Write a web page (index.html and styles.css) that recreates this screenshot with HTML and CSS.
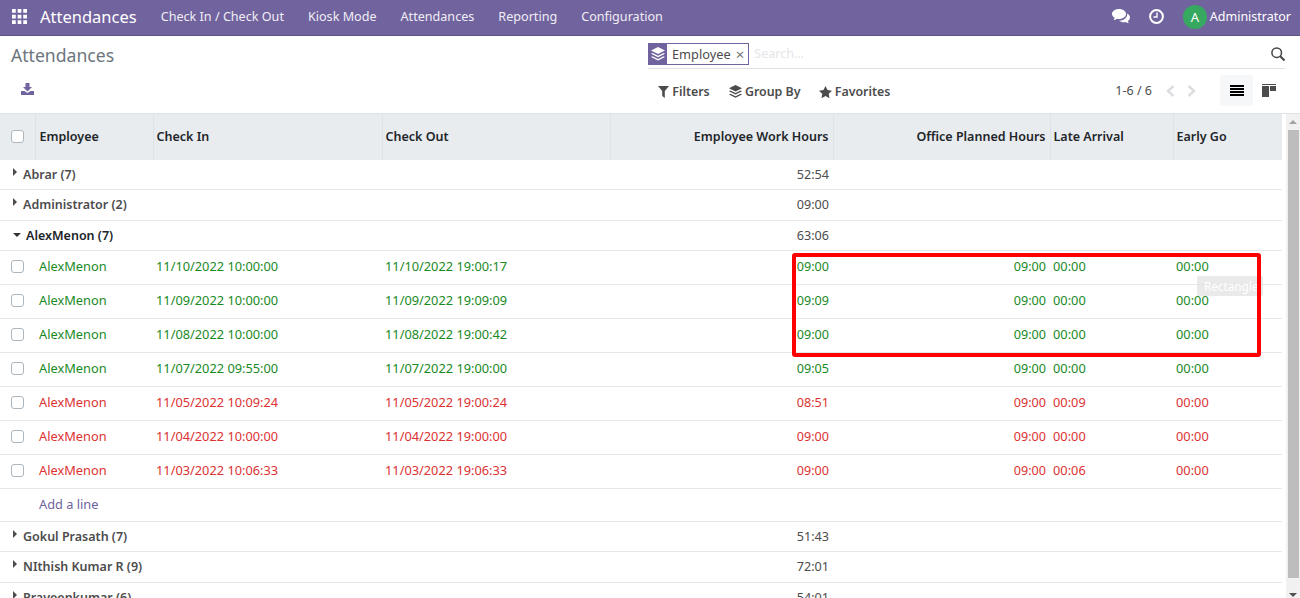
FILE: index.html
```html
<!DOCTYPE html>
<html lang="en">
<head>
    <meta charset="UTF-8">
    <title>Attendances</title>
    <link rel="stylesheet" href="styles.css">
</head>
<body>
    <header class="navbar">
        <svg class="apps-icon" width="15" height="15" viewBox="0 0 16 16" fill="#fff">
            <path d="M0 0h4v4H0zM6 0h4v4H6zM12 0h4v4h-4zM0 6h4v4H0zM6 6h4v4H6zM12 6h4v4h-4zM0 12h4v4H0zM6 12h4v4H6zM12 12h4v4h-4z"/>
        </svg>
        <span class="brand">Attendances</span>
        <nav class="menu">
            <span>Check In / Check Out</span>
            <span>Kiosk Mode</span>
            <span>Attendances</span>
            <span>Reporting</span>
            <span>Configuration</span>
        </nav>
        <div class="systray">
            <svg width="18" height="15" viewBox="0 0 18 15" fill="#fff">
                <path d="M7 0c3.900 0 7 2.200 7 5s-3.100 5-7 5c-.7 0-1.300-.1-1.900-.2C4 10.600 2.800 11 1.500 11c.6-.7 1-1.500 1.100-2.300C1 7.800 0 6.500 0 5c0-2.800 3.100-5 7-5z"/>
                <path d="M15.200 4.500c1.700.9 2.800 2.300 2.800 3.900 0 1.400-.8 2.600-2.100 3.500.1.800.5 1.600 1.100 2.300-1.300 0-2.500-.5-3.500-1.200-.6.100-1.100.2-1.700.2-1.900 0-3.600-.6-4.800-1.500 4.300.1 8.400-2.500 8.200-7.200z"/>
            </svg>
            <svg class="clock" width="15" height="15" viewBox="0 0 15 15" fill="none" stroke="#fff">
                <circle cx="7.500" cy="7.500" r="6.400" stroke-width="2"/>
                <path d="M8 3.500v4.500H4.500" stroke-width="1.400"/>
            </svg>
            <span class="avatar">A</span>
            <span class="user">Administrator</span>
        </div>
    </header>

    <section class="control-panel">
        <div class="cp-left">
            <div class="page-title">Attendances</div>
            <svg class="download" width="13" height="12" viewBox="0 0 13 12" fill="#71639e">
                <path d="M4.500 0h4v4H11L6.500 8.500 2 4h2.500z"/>
                <path d="M0 8h3.500l3 2 3-2H13v4H0z"/>
            </svg>
        </div>
        <div class="cp-main">
            <div class="searchbar">
                <div class="facet">
                    <span class="facet-icon">
                        <svg width="14" height="14" viewBox="0 0 14 14" fill="#fff">
                            <path d="M7 0l7 3.500L7 7 0 3.500z"/>
                            <path d="M1.500 6L7 8.700 12.500 6 14 6.800 7 10.300 0 6.800z"/>
                            <path d="M1.500 9.300L7 12l5.500-2.700 1.500.8L7 13.600 0 10.100z"/>
                        </svg>
                    </span>
                    <span class="facet-label">Employee</span>
                    <span class="facet-close">×</span>
                </div>
                <span class="placeholder">Search...</span>
                <svg class="search-icon" width="14" height="14" viewBox="0 0 14 14" fill="none" stroke="#444" stroke-width="1.500">
                    <circle cx="5.700" cy="5.700" r="4.800"/>
                    <path d="M9.200 9.200L13.500 13.500" stroke-width="2"/>
                </svg>
            </div>
            <div class="cp-bottom">
                <div class="filters">
                    <span class="filter">
                        <svg width="11" height="12" viewBox="0 0 11 12" fill="#4c4c4c"><path d="M0 0h11L6.800 5v7L4.200 10V5z"/></svg>
                        Filters
                    </span>
                    <span class="filter">
                        <svg width="13" height="13" viewBox="0 0 14 14" fill="#4c4c4c">
                            <path d="M7 0l7 3.500L7 7 0 3.500z"/>
                            <path d="M1.500 6L7 8.700 12.500 6 14 6.800 7 10.300 0 6.800z"/>
                            <path d="M1.500 9.300L7 12l5.500-2.700 1.500.8L7 13.600 0 10.100z"/>
                        </svg>
                        Group By
                    </span>
                    <span class="filter">
                        <svg width="13" height="12" viewBox="0 0 13 12" fill="#4c4c4c"><path d="M6.500 0l2 4.100 4.500.6-3.300 3.100.8 4.500-4-2.200-4 2.200.8-4.500L0 4.700l4.500-.6z"/></svg>
                        Favorites
                    </span>
                </div>
                <div class="pager-row">
                    <span class="pager">1-6 / 6</span>
                    <svg class="chevron" width="9" height="12" viewBox="0 0 9 12" fill="none" stroke="#dcdde0" stroke-width="2.400"><path d="M7.500 1L2 6l5.500 5"/></svg>
                    <svg class="chevron" width="9" height="12" viewBox="0 0 9 12" fill="none" stroke="#dcdde0" stroke-width="2.400"><path d="M1.500 1L7 6l-5.500 5"/></svg>
                    <span class="view-btn active">
                        <svg width="14" height="11" viewBox="0 0 14 11" fill="#000"><path d="M0 0h14v2H0zM0 3h14v2H0zM0 6h14v2H0zM0 9h14v2H0z"/></svg>
                    </span>
                    <span class="view-btn">
                        <svg width="14" height="13" viewBox="0 0 14 13" fill="#4c4c4c"><path d="M0 0h14v1H0z"/><path d="M0 2h7v11H0z"/><path d="M8 2h6v5H8z"/></svg>
                    </span>
                </div>
            </div>
        </div>
    </section>

    <div class="content">
        <table class="list">
            <colgroup>
                <col class="c-check"><col class="c-emp"><col class="c-in"><col class="c-out">
                <col class="c-work"><col class="c-plan"><col class="c-late"><col>
            </colgroup>
            <thead>
                <tr>
                    <th><span class="checkbox"></span></th>
                    <th>Employee</th>
                    <th>Check In</th>
                    <th>Check Out</th>
                    <th class="num">Employee Work Hours</th>
                    <th class="num">Office Planned Hours</th>
                    <th>Late Arrival</th>
                    <th>Early Go</th>
                </tr>
            </thead>
            <tbody>
                <tr class="group h29"><td colspan="4"><i class="caret"></i>Abrar (7)</td><td class="num">52:54</td><td colspan="3"></td></tr>
                <tr class="group h31"><td colspan="4"><i class="caret"></i>Administrator (2)</td><td class="num">09:00</td><td colspan="3"></td></tr>
                <tr class="group open h30"><td colspan="4"><i class="caret down"></i>AlexMenon (7)</td><td class="num">63:06</td><td colspan="3"></td></tr>

                <tr class="row ok"><td><span class="checkbox"></span></td><td>AlexMenon</td><td>11/10/2022 10:00:00</td><td>11/10/2022 19:00:17</td><td class="num">09:00</td><td class="num">09:00</td><td>00:00</td><td>00:00</td></tr>
                <tr class="row ok"><td><span class="checkbox"></span></td><td>AlexMenon</td><td>11/09/2022 10:00:00</td><td>11/09/2022 19:09:09</td><td class="num">09:09</td><td class="num">09:00</td><td>00:00</td><td>00:00</td></tr>
                <tr class="row ok"><td><span class="checkbox"></span></td><td>AlexMenon</td><td>11/08/2022 10:00:00</td><td>11/08/2022 19:00:42</td><td class="num">09:00</td><td class="num">09:00</td><td>00:00</td><td>00:00</td></tr>
                <tr class="row ok"><td><span class="checkbox"></span></td><td>AlexMenon</td><td>11/07/2022 09:55:00</td><td>11/07/2022 19:00:00</td><td class="num">09:05</td><td class="num">09:00</td><td>00:00</td><td>00:00</td></tr>
                <tr class="row late"><td><span class="checkbox"></span></td><td>AlexMenon</td><td>11/05/2022 10:09:24</td><td>11/05/2022 19:00:24</td><td class="num">08:51</td><td class="num">09:00</td><td>00:09</td><td>00:00</td></tr>
                <tr class="row late"><td><span class="checkbox"></span></td><td>AlexMenon</td><td>11/04/2022 10:00:00</td><td>11/04/2022 19:00:00</td><td class="num">09:00</td><td class="num">09:00</td><td>00:00</td><td>00:00</td></tr>
                <tr class="row late"><td><span class="checkbox"></span></td><td>AlexMenon</td><td>11/03/2022 10:06:33</td><td>11/03/2022 19:06:33</td><td class="num">09:00</td><td class="num">09:00</td><td>00:06</td><td>00:00</td></tr>

                <tr class="add-line"><td></td><td colspan="7">Add a line</td></tr>
                <tr class="group h30"><td colspan="4"><i class="caret"></i>Gokul Prasath (7)</td><td class="num">51:43</td><td colspan="3"></td></tr>
                <tr class="group h31"><td colspan="4"><i class="caret"></i>NIthish Kumar R (9)</td><td class="num">72:01</td><td colspan="3"></td></tr>
                <tr class="group h30"><td colspan="4"><i class="caret"></i>Praveenkumar (6)</td><td class="num">54:01</td><td colspan="3"></td></tr>
            </tbody>
        </table>
        <div class="scrollbar">
            <i class="scroll-up"></i>
            <div class="scroll-thumb"></div>
            <i class="scroll-down"></i>
        </div>
    </div>

    <!-- annotation drawn over the screenshot -->
    <div class="rect-label">Rectangle</div>
    <div class="red-box"></div>
</body>
</html>
```
FILE: styles.css
```css
* {
    box-sizing: border-box;
}

html, body {
    height: 598px;
    overflow: hidden;
}

body {
    margin: 0;
    position: relative;
    font-family: "Noto Sans", "Open Sans", sans-serif;
    font-size: 12.5px;
    color: #4c4c4c;
    background: #fff;
}

/* top bar */
.navbar {
    display: flex;
    align-items: center;
    height: 36px;
    padding: 0 0 2px 12px;
    background: #71639e;
    border-bottom: 1px solid #5f5387;
    color: #fff;
}

.brand {
    margin-left: 13px;
    font-size: 16.5px;
}

.menu {
    display: flex;
    gap: 24px;
    margin-left: 24px;
    font-size: 12.6px;
    color: #f0eef5;
}

.systray {
    display: flex;
    align-items: center;
    margin-left: auto;
    padding-right: 9px;
}

.clock {
    margin-left: 19px;
}

.avatar {
    display: flex;
    align-items: center;
    justify-content: center;
    width: 24px;
    height: 24px;
    margin-left: 19px;
    border-radius: 50%;
    background: #36a860;
    font-size: 13px;
}

.user {
    margin-left: 3px;
    font-size: 12.5px;
}

/* control panel */
.control-panel {
    display: flex;
    height: 78px;
    border-bottom: 1px solid #dee2e6;
}

.cp-left {
    width: 648px;
    padding: 7px 0 0 11px;
}

.page-title {
    font-size: 17.6px;
    line-height: 24px;
    color: #6c757d;
}

.download {
    display: block;
    margin: 16px 0 0 10px;
}

.cp-main {
    flex: 1;
    padding-right: 15px;
}

.searchbar {
    display: flex;
    align-items: center;
    height: 33px;
    padding: 7px 0 4px;
    border-bottom: 1px solid #dee2e6;
}

.facet {
    display: flex;
    align-items: center;
    height: 22px;
    border: 1px solid #71639e;
}

.facet-icon {
    display: flex;
    align-items: center;
    justify-content: center;
    width: 19px;
    height: 22px;
    margin-left: -1px;
    background: #71639e;
}

.facet-label {
    margin-left: 5px;
    font-size: 12.8px;
    line-height: 20px;
}

.facet-close {
    margin: 0 4px 0 5px;
    color: #777;
    font-size: 15px;
    line-height: 20px;
}

.placeholder {
    margin-left: 5px;
    color: #e4e5e8;
}

.search-icon {
    margin-left: auto;
}

.cp-bottom {
    display: flex;
    justify-content: space-between;
    margin-top: 6px;
}

.filters {
    display: flex;
    gap: 19px;
    align-items: center;
    height: 31px;
    padding: 2px 0 0 10px;
    font-size: 12.4px;
    font-weight: 600;
}

.filter svg {
    vertical-align: -2px;
}

.filter:last-child {
    margin-left: -1px;
}

.pager-row {
    display: flex;
    align-items: center;
    height: 31px;
}

.pager {
    margin-right: 14px;
}

.chevron {
    margin-right: 12px;
}

.view-btn {
    display: flex;
    align-items: center;
    justify-content: center;
    width: 32px;
    height: 31px;
    border-radius: 3px;
}

.view-btn.active {
    width: 33px;
    margin-left: 12px;
    background: #f6f7f9;
}

/* list */
.content {
    display: flex;
    justify-content: space-between;
}

.list {
    width: 1282px;
    table-layout: fixed;
    border-collapse: collapse;
    flex: none;
}

.c-check { width: 35px; }
.c-emp { width: 118px; }
.c-in { width: 229px; }
.c-out { width: 228px; }
.c-work { width: 223px; }
.c-plan { width: 217px; }
.c-late { width: 123px; }

.list th {
    height: 46px;
    padding: 0 3px 2px;
    background: #e9ecef;
    border-left: 1px solid #dee2e6;
    color: #212529;
    font-weight: 600;
    text-align: left;
}

.list th:first-child {
    border-left: 0;
    padding-left: 11px;
}

.list th:nth-child(2),
.row td:nth-child(2),
.add-line td:nth-child(2) {
    padding-left: 4px;
}

.list td {
    padding: 0 3px;
    border-bottom: 1px solid #e6e7e9;
}

.list .num {
    text-align: right;
    padding-right: 4px;
}

.group.h29 td {
    height: 29px;
}

.group.h30 td {
    height: 30px;
}

.group.h31 td {
    height: 31px;
}

.group td:first-child {
    padding-left: 13px;
    font-weight: 600;
}

.group .num {
    font-weight: 400;
    font-size: 12.6px;
}

.group.open td:first-child {
    color: #212529;
}

.caret {
    display: inline-block;
    width: 0;
    height: 0;
    margin-right: 6px;
    vertical-align: 3px;
    border-top: 4px solid transparent;
    border-bottom: 4px solid transparent;
    border-left: 4px solid #4c4c4c;
}

.caret.down {
    margin-right: 5px;
    vertical-align: 3px;
    border-left: 4px solid transparent;
    border-right: 4px solid transparent;
    border-top: 4px solid #333;
    border-bottom: 0;
}

.row td {
    height: 34px;
    padding-bottom: 2px;
    font-size: 12.8px;
}

.row td.num {
    font-size: 12.6px;
}

.row td:first-child {
    padding-left: 11px;
}

.row.ok td {
    color: #198a1f;
}

.row.late td {
    color: #dc3232;
}

.checkbox {
    display: block;
    width: 13px;
    height: 13px;
    background: #fff;
    border: 1px solid #adb5bd;
    border-radius: 3px;
}

.add-line td {
    height: 33px;
    padding-bottom: 2px;
    font-size: 12.8px;
    color: #71639e;
}

/* scrollbar */
.scrollbar {
    display: flex;
    flex-direction: column;
    width: 14px;
    height: 484px;
    background: #f1f1f1;
}

.scroll-up,
.scroll-down {
    flex: none;
    align-self: center;
    border-left: 4px solid transparent;
    border-right: 4px solid transparent;
}

.scroll-up {
    margin-top: 6px;
    border-bottom: 4px solid #a3a3a3;
}

.scroll-down {
    margin: 15px 0 1px;
    border-top: 4px solid #505050;
}

.scroll-thumb {
    flex: 1;
    margin: 6px 1px 0 2px;
    background: #bdbdbd;
}

/* annotation over the page */
.red-box {
    position: absolute;
    left: 792px;
    top: 253px;
    width: 469px;
    height: 104px;
    border: 4px solid #fe0000;
    border-radius: 3px;
}

.rect-label {
    position: absolute;
    left: 1197px;
    top: 276px;
    width: 66px;
    height: 20px;
    padding-left: 7px;
    background: rgba(225, 225, 225, 0.7);
    border-radius: 2px;
    color: #fff;
    font-size: 11.7px;
    line-height: 20px;
}
```
